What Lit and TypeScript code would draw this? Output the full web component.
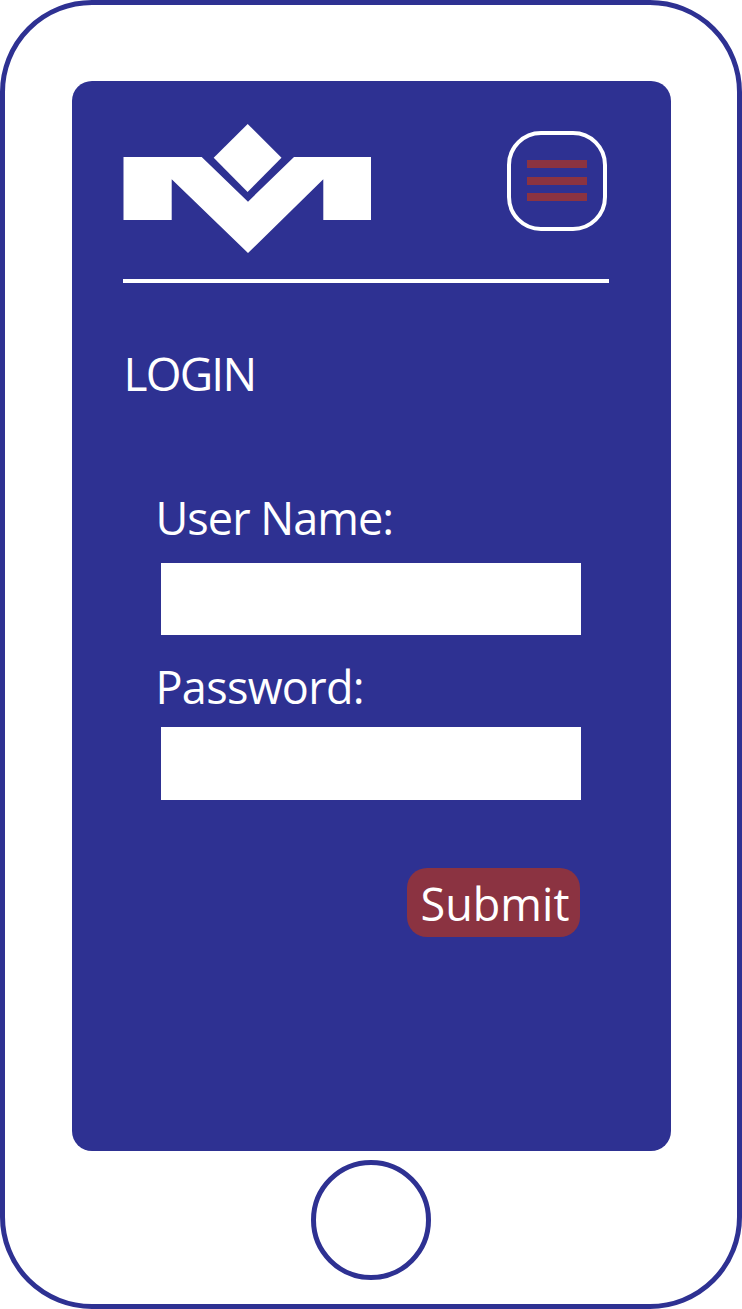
import { LitElement, html, css } from "lit";
import { customElement } from "lit/decorators.js";

@customElement("app-root")
export class AppRoot extends LitElement {
  static styles = css`
    :host { display: block; width: 742px; height: 1309px; background: #fff; font-family: "Open Sans", "Noto Sans", sans-serif; color: #fff; }
    * { box-sizing: border-box; }
    .phone { width: 742px; height: 1309px; border: 5px solid #2e3192; border-radius: 92px; background: #fff; display: flex; flex-direction: column; align-items: center; padding-top: 76px; }
    .screen { width: 599px; height: 1070px; background: #2e3192; border-radius: 20px; flex: none; padding: 43px 61.5px 0 51.5px; display: flex; flex-direction: column; }
    .header { display: flex; justify-content: space-between; align-items: flex-start; height: 158.5px; border-bottom: 4px solid #fff; flex: none; }
    .logo { display: block; width: 248px; height: 129px; }
    .menu { width: 100px; height: 99.5px; margin: 7px 2px 0 0; border: 4px solid #fff; border-radius: 34px; background: none; padding: 0; display: flex; flex-direction: column; align-items: center; justify-content: center; gap: 8.5px; }
    .menu span { display: block; width: 60px; height: 8px; background: #8b3341; }
    h1 { margin: 60px 0 0 0.5px; font-size: 46px; line-height: 60px; font-weight: 400; letter-spacing: -1.8px; }
    form { display: flex; flex-direction: column; margin: 0; padding: 0 0 0 37.5px; }
    label { display: block; font-size: 45px; line-height: 56px; margin-left: -5px; }
    .user { margin-top: 87.5px; margin-bottom: 16.5px; letter-spacing: -0.95px; }
    .pass { margin-top: 24px; margin-bottom: 12px; letter-spacing: -0.7px; }
    input { display: block; width: 420px; height: 72.5px; border: 0; background: #fff; border-radius: 0; padding: 0 8px; margin: 0; }
    .actions { display: flex; justify-content: flex-start; margin-top: 68.5px; padding-left: 246px; }
    .submit { width: 173px; height: 69px; border: 0; border-radius: 20px; background: #8b3341; color: #fff; font: inherit; font-size: 45px; line-height: 66px; letter-spacing: 0; padding: 3px 0 0 4px; }
    .home { width: 120px; height: 120px; border-radius: 50%; border: 5px solid #2e3192; background: #fff; margin-top: 9px; flex: none; padding: 0; }
  `;

  render() {
    return html`
      <div class="phone">
        <main class="screen">
          <header class="header">
            <svg class="logo" viewBox="123 124 248 129" aria-label="Logo">
              <path fill="#fff" d="M123.5 157H201.7L248 201.7L294 157H371V220H323.3V179.3L248 253L171.7 179.3V220H123.5Z" />
              <path fill="#fff" d="M247.7 124L281.5 157.7L247.6 192L213.7 157.7Z" />
            </svg>
            <button class="menu" aria-label="Menu"><span></span><span></span><span></span></button>
          </header>
          <h1>LOGIN</h1>
          <form>
            <label class="user" for="u">User Name:</label>
            <input id="u" type="text" />
            <label class="pass" for="p">Password:</label>
            <input id="p" type="password" />
            <div class="actions"><button class="submit" type="button">Submit</button></div>
          </form>
        </main>
        <button class="home" aria-label="Home"></button>
      </div>
    `;
  }
}
